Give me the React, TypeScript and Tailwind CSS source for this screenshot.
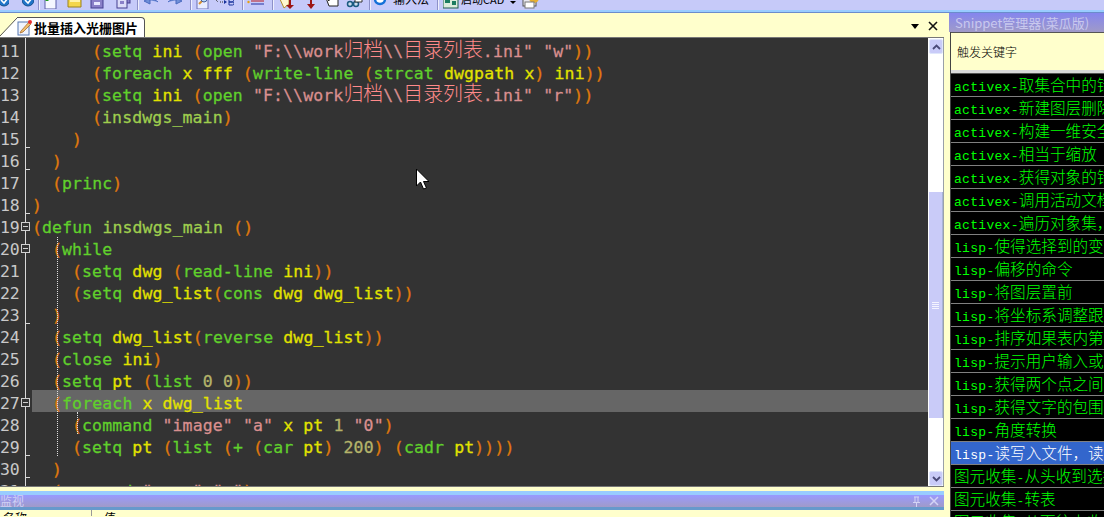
import React from "react";

const P = "text-[#e07a0c]";
const F = "text-[#60d02c]";
const V = "text-[#e2e200]";
const S = "text-[#d98f8f]";
const N = "text-[#b5b36a]";
const O = "text-[#9fce4e]";

type Tok = [string, string];
type Line = { n: number; ind: string; toks: Tok[]; fold?: boolean; tick?: boolean; hl?: boolean };

function Str({ text }: { text: string }) {
  const parts = text.split(/([\u4e00-\u9fff]+)/);
  return (
    <span className={S}>
      {parts.map((p, i) =>
        /[\u4e00-\u9fff]/.test(p) ? (
          <span key={i} className="text-[#ff8a8a] text-[19.900px] font-light tracking-normal leading-[0px] [-webkit-text-stroke:0px] font-['Noto_Sans_CJK_SC',sans-serif]">{p}</span>
        ) : (
          <span key={i}>{p}</span>
        )
      )}
    </span>
  );
}

const I0 = "pl-[0px]";
const I2 = "pl-[20px]";
const I4 = "pl-[40px]";
const I6 = "pl-[60px]";

const lines: Line[] = [
  { n: 11, ind: I6, toks: [[P, "("], [F, "setq"], [V, " ini "], [P, "("], [F, "open"], [S, ' "F:\\\\work归档\\\\目录列表.ini" "w"'], [P, "))"]] },
  { n: 12, ind: I6, toks: [[P, "("], [F, "foreach"], [V, " x fff "], [P, "("], [F, "write-line"], [V, " "], [P, "("], [F, "strcat"], [V, " dwgpath x"], [P, ")"], [V, " ini"], [P, "))"]] },
  { n: 13, ind: I6, toks: [[P, "("], [F, "setq"], [V, " ini "], [P, "("], [F, "open"], [S, ' "F:\\\\work归档\\\\目录列表.ini" "r"'], [P, "))"]] },
  { n: 14, ind: I6, toks: [[P, "("], [O, "insdwgs_main"], [P, ")"]] },
  { n: 15, ind: I4, toks: [[P, ")"]], tick: true },
  { n: 16, ind: I2, toks: [[P, ")"]], tick: true },
  { n: 17, ind: I2, toks: [[P, "("], [F, "princ"], [P, ")"]] },
  { n: 18, ind: I0, toks: [[P, ")"]], tick: true },
  { n: 19, ind: I0, fold: true, toks: [[P, "("], [F, "defun"], [O, " insdwgs_main "], [P, "()"]] },
  { n: 20, ind: I2, fold: true, toks: [[P, "("], [F, "while"]] },
  { n: 21, ind: I4, toks: [[P, "("], [F, "setq"], [V, " dwg "], [P, "("], [F, "read-line"], [V, " ini"], [P, "))"]] },
  { n: 22, ind: I4, toks: [[P, "("], [F, "setq"], [V, " dwg_list"], [P, "("], [F, "cons"], [V, " dwg dwg_list"], [P, "))"]] },
  { n: 23, ind: I2, toks: [[P, ")"]], tick: true },
  { n: 24, ind: I2, toks: [[P, "("], [F, "setq"], [V, " dwg_list"], [P, "("], [F, "reverse"], [V, " dwg_list"], [P, "))"]] },
  { n: 25, ind: I2, toks: [[P, "("], [F, "close"], [V, " ini"], [P, ")"]] },
  { n: 26, ind: I2, toks: [[P, "("], [F, "setq"], [V, " pt "], [P, "("], [F, "list"], [N, " 0 0"], [P, "))"]] },
  { n: 27, ind: I2, fold: true, hl: true, toks: [[P, "("], [F, "foreach"], [V, " x dwg_list"]] },
  { n: 28, ind: I4, toks: [[P, "("], [F, "command"], [S, ' "image" "a"'], [V, " x pt "], [N, "1"], [S, ' "0"'], [P, ")"]] },
  { n: 29, ind: I4, tick: true, toks: [[P, "("], [F, "setq"], [V, " pt "], [P, "("], [F, "list"], [V, " "], [P, "("], [F, "+"], [V, " "], [P, "("], [F, "car"], [V, " pt"], [P, ")"], [N, " 200"], [P, ")"], [V, " "], [P, "("], [F, "cadr"], [V, " pt"], [P, "))))"]] },
  { n: 30, ind: I2, tick: true, toks: [[P, ")"]] },
  { n: 31, ind: I2, toks: [[P, "("], [F, "command"], [S, ' "zoom" "e"'], [P, ")"]] },
];

function CodeRow({ l }: { l: Line }) {
  return (
    <div className="flex h-[22px] leading-[28px] whitespace-pre">
      <div className="w-[19px] shrink-0 text-right text-[#c9c9c9] -tracking-[0.3px] [-webkit-text-stroke:0px]">{l.n}</div>
      <div className="w-[6px] shrink-0" />
      <div className="relative w-[7px] shrink-0 border-l border-[#d8d8d8]">
        {l.fold && (
          <div className="absolute left-[-5px] top-[8px] w-[9px] h-[9px] border border-[#d0d0d0] bg-[#333333] flex items-center justify-center">
            <div className="w-[5px] h-px bg-[#d0d0d0]" />
          </div>
        )}
        {l.tick && <div className="absolute left-0 bottom-0 w-[4px] h-px bg-[#d8d8d8]" />}
      </div>
      <div className={`flex-1 tracking-[0.12px] ${l.ind} ${l.hl ? "bg-[#666666]" : ""}`}>
        {l.toks.map((t, i) => (t[0] === S ? <Str key={i} text={t[1]} /> : <span key={i} className={t[0]}>{t[1]}</span>))}
      </div>
    </div>
  );
}

const rows: string[] = [
  "activex-取集合中的错误",
  "activex-新建图层删除图层",
  "activex-构建一维安全数组",
  "activex-相当于缩放",
  "activex-获得对象的错误",
  "activex-调用活动文档对象",
  "activex-遍历对象集，获得",
  "lisp-使得选择到的变量",
  "lisp-偏移的命令",
  "lisp-将图层置前",
  "lisp-将坐标系调整跟对象",
  "lisp-排序如果表内第一",
  "lisp-提示用户输入或选",
  "lisp-获得两个点之间的",
  "lisp-获得文字的包围框",
  "lisp-角度转换",
  "lisp-读写入文件，读取",
  "图元收集-从头收到选择",
  "图元收集-转表",
  "图元收集-从下往上收集",
];

function Mixed({ text }: { text: string }) {
  const parts = text.split(/([a-z-]+)/);
  return (
    <>
      {parts.map((p, i) =>
        /[a-z-]/.test(p) ? (
          <span key={i} className="text-[13px] font-['Liberation_Mono',monospace] tracking-[0.3px]">{p}</span>
        ) : (
          <span key={i} className="text-[15.600px] font-light font-['Noto_Sans_CJK_SC',sans-serif]">{p}</span>
        )
      )}
    </>
  );
}

function Ico({ w, children }: { w: number; children: React.ReactNode }) {
  return (
    <svg width={w} height={16} viewBox={`0 0 ${w} 16`} className="shrink-0 -mt-[7px]">
      {children}
    </svg>
  );
}

function Sep() {
  return <div className="w-[2px] h-[10px] shrink-0 border-l border-[#8d91c8] bg-white/70" />;
}

function Toolbar() {
  return (
    <div className="h-[13px] shrink-0 overflow-hidden bg-[#c6caf9] flex flex-col">
      <div className="h-[10px] shrink-0 flex items-start overflow-hidden">
        <div className="ml-[-1px] mr-[13px]">
          <Ico w={10}><circle cx="5" cy="7" r="6" fill="#1f74c8" stroke="#16508c" /><path d="M2 7l3 3 4-5" stroke="#fff" strokeWidth="1.6" fill="none" /></Ico>
        </div>
        <div className="mr-[7px]">
          <Ico w={12}><circle cx="6" cy="7" r="6" fill="#1f74c8" stroke="#16508c" /><path d="M3 7l3 3 4-5" stroke="#fff" strokeWidth="1.6" fill="none" /></Ico>
        </div>
        <div className="ml-[-3px] mr-[2px]"><Sep /></div>
        <div className="mr-[8px]">
          <Ico w={17}><rect x="3" y="1" width="11" height="15" fill="#f4f6ff" stroke="#5a5fa8" /><path d="M1 4h8M5 0v8" stroke="#1e9c1e" strokeWidth="3" /></Ico>
        </div>
        <div className="mr-[7px]">
          <Ico w={16}><path d="M1 3h13v11H1z" fill="#f4d64c" stroke="#9a8220" /><path d="M3 8h10" stroke="#fff3a8" strokeWidth="2" /></Ico>
        </div>
        <div className="mr-[12px]">
          <Ico w={14}><rect x="1" y="1" width="12" height="14" fill="#8a80c8" stroke="#453e90" /><rect x="4" y="9" width="6" height="3" fill="#e8e8ff" /></Ico>
        </div>
        <div className="mr-[6px]">
          <Ico w={15}><rect x="4" y="0" width="10" height="10" fill="#8a80c8" stroke="#453e90" /><rect x="1" y="3" width="10" height="12" fill="#dcdcf8" stroke="#453e90" /><rect x="4" y="8" width="4" height="3" fill="#8a80c8" /></Ico>
        </div>
        <Sep />
        <div className="ml-[3px] mr-[8px]">
          <Ico w={17}><path d="M8 5L2 8l6 3zM7 7c4-1 7 0 9 2" fill="#6f8fd8" stroke="#4a6ac0" /></Ico>
        </div>
        <div className="mr-[6px]">
          <Ico w={17}><path d="M9 5l6 3-6 3zM10 7C6 6 3 7 1 9" fill="#6f8fd8" stroke="#4a6ac0" /></Ico>
        </div>
        <Sep />
        <div className="ml-[3px] mr-[6px]">
          <Ico w={15}><rect x="2" y="1" width="11" height="15" fill="#e8ecff" stroke="#6a70b8" /><path d="M4 11l3-3" stroke="#d89030" strokeWidth="2" /><circle cx="9" cy="6" r="3" fill="#b8d8f8" stroke="#46609c" /></Ico>
        </div>
        <div className="mr-[8px]">
          <Ico w={18}><path d="M0 7l2 2M4 9h5" stroke="#333" strokeDasharray="1 1" fill="none" /><path d="M8 7l3 2-3 2z" fill="#16309a" /><path d="M13 6h3a1.5 1.5 0 010 3h-3zm0 3h3.500a1.500 1.500 0 010 3H13z" fill="none" stroke="#16309a" /></Ico>
        </div>
        <Sep />
        <div className="ml-[3px] mr-[7px]">
          <Ico w={18}><path d="M4 8h13" stroke="#bb1a1a" /><path d="M4 11h13" stroke="#2230a0" /><circle cx="1.500" cy="9" r="1.200" fill="#e8a010" /></Ico>
        </div>
        <Sep />
        <div className="ml-[4px] mr-[10px]">
          <Ico w={17}><path d="M1 4h10v7l-5 4z" fill="#fff8d0" stroke="#b09030" /><path d="M12 1v12" stroke="#9c1414" strokeWidth="2" /><path d="M8 12h8l-4 4z" fill="#9c1414" /></Ico>
        </div>
        <div className="mr-[6px]">
          <Ico w={12}><path d="M6 1v12" stroke="#9c1414" strokeWidth="2" /><path d="M2 11h8l-4 5z" fill="#9c1414" /></Ico>
        </div>
        <div className="mr-[6px]">
          <Ico w={17}><path d="M3 5l3 3V3h6l1 2 2 1v7H6z" fill="#fff" stroke="#222" /></Ico>
        </div>
        <div className="mr-[6px]">
          <Ico w={17}><circle cx="4" cy="11" r="2.500" fill="#cde" stroke="#1b5a80" strokeWidth="1.500" /><circle cx="10" cy="11" r="2.500" fill="#cde" stroke="#1b5a80" strokeWidth="1.500" /><path d="M9 3h7v6H9z" fill="#fff" stroke="#333" /></Ico>
        </div>
        <Sep />
        <div className="ml-[3px] mr-[7px]">
          <Ico w={12}><circle cx="6" cy="6" r="5" fill="#fff" stroke="#1470d8" strokeWidth="2.500" /></Ico>
        </div>
        <div className="mr-[10px] w-[34px] -mt-[9px] text-[12px] leading-[16px] text-black font-['Noto_Sans_CJK_SC',sans-serif] whitespace-nowrap">输入法</div>
        <Sep />
        <div className="ml-[4px] mr-[2px]">
          <Ico w={16}><rect x="0" y="1" width="15" height="14" fill="#dcecdc" stroke="#1c5c50" /><path d="M2 5h5v5H2zM9 8h4v4H9z" fill="#1c7c60" /></Ico>
        </div>
        <div className="mr-[8px] w-[41px] -mt-[9px] text-[11px] leading-[16px] text-black font-['Noto_Sans_CJK_SC',sans-serif] whitespace-nowrap">启动CAD</div>
        <div className="mr-[6px] mt-[1px] w-0 h-0 border-x-[3px] border-x-transparent border-t-[3px] border-t-black" />
        <Ico w={18}><rect x="1" y="6" width="13" height="7" fill="#e8e8f0" stroke="#555" /><circle cx="12" cy="5" r="5" fill="#e8b030" /><rect x="3" y="9" width="9" height="6" fill="#fff" stroke="#777" /></Ico>
      </div>
      <div className="h-[2px] shrink-0 bg-[#99ccff]" />
      <div className="h-px shrink-0 bg-[#6b8ccb]" />
    </div>
  );
}

function TabStrip() {
  return (
    <div className="h-[25px] shrink-0 bg-[#ffffcc] flex flex-col">
      <div className="h-[24px] flex items-end">
        <svg width="17" height="20" viewBox="0 0 17 20" className="shrink-0">
          <path d="M0 20L17 1V20Z" fill="#fff" />
          <path d="M0 19L17 1" stroke="#555" fill="none" />
        </svg>
        <div className="w-[128px] h-[20px] bg-white border-t border-r border-[#555] rounded-tr-[4px] flex items-center">
          <svg width="16" height="17" viewBox="0 0 16 17" className="shrink-0">
            <rect x="1" y="3" width="11" height="13" fill="#f0f4ff" stroke="#5577b0" />
            <path d="M4 12L12 3l2 2-8 8-3 1z" fill="#f0c070" stroke="#a06020" strokeWidth=".7" />
            <circle cx="13" cy="3" r="2" fill="#e83030" />
          </svg>
          <span className="ml-[1px] text-[13px] font-bold text-black font-['Noto_Sans_CJK_SC',sans-serif] whitespace-nowrap">批量插入光栅图片</span>
        </div>
        <div className="flex-1 h-full flex items-center justify-end pr-[6px] pt-[2px]">
          <div className="w-0 h-0 border-x-[4px] border-x-transparent border-t-[5px] border-t-black mr-[9px]" />
          <svg width="10" height="10" viewBox="0 0 10 10"><path d="M1 1l8 8M9 1l-8 8" stroke="#111" strokeWidth="1.600" /></svg>
        </div>
      </div>
      <div className="h-px bg-[#777777]" />
    </div>
  );
}

function ScrollBtn({ up }: { up?: boolean }) {
  return (
    <div className="h-[15px] w-[14px] bg-[#c9cbf8] border border-[#dfe6fb] rounded-[2px] flex items-center justify-center shrink-0">
      <svg width="9" height="6" viewBox="0 0 9 6">
        <path d={up ? "M1 5l3.500-3.500L8 5" : "M1 1l3.500 3.500L8 1"} stroke="#4a4a78" strokeWidth="1.800" fill="none" />
      </svg>
    </div>
  );
}

function Scrollbar() {
  return (
    <div className="w-[16px] shrink-0 bg-white flex flex-col pl-px pt-px border-r border-[#9aa0a8]">
      <ScrollBtn up />
      <div className="h-[138px] shrink-0" />
      <div className="h-[226px] w-[14px] shrink-0 bg-[#c9cbf8] border-r border-[#a8b4d8] flex flex-col items-center justify-center gap-px">
        <div className="w-[7px] h-px bg-[#f4f4ff]" />
        <div className="w-[7px] h-px bg-[#f4f4ff]" />
        <div className="w-[7px] h-px bg-[#f4f4ff]" />
        <div className="w-[7px] h-px bg-[#f4f4ff]" />
      </div>
      <div className="h-[53px] shrink-0" />
      <ScrollBtn />
    </div>
  );
}

function Editor() {
  return (
    <div className="h-[449px] shrink-0 flex overflow-hidden border-b border-[#777777]">
      <div className="relative flex-1 bg-[#333333] overflow-hidden text-[16.500px] [-webkit-text-stroke:0.3px] font-['DejaVu_Sans_Mono',monospace]">
        {lines.map((l) => (
          <CodeRow key={l.n} l={l} />
        ))}
        <div className="absolute left-[57px] top-[199px] h-[219px] border-l border-dotted border-[#e0e0e0]" />
        <div className="absolute left-[77px] top-[374px] h-[22px] border-l border-dotted border-[#e0e0e0]" />
        <svg width="14" height="22" viewBox="0 0 14 22" className="absolute left-[415px] top-[130px]">
          <path d="M1.500 1v17l4-4 3 7 3-1-3-6.500h5.500z" fill="#fff" stroke="#000" />
        </svg>
      </div>
      <Scrollbar />
    </div>
  );
}

function BottomPanel() {
  return (
    <div className="h-[29px] shrink-0 flex flex-col overflow-hidden">
      <div className="h-[4px] shrink-0 bg-[#ffffcc]" />
      <div className="h-[4px] shrink-0 bg-[#99ccff]" />
      <div className="h-[12px] shrink-0 bg-gradient-to-b from-[#9999ff] to-[#a09ac8] flex items-center justify-between pr-[5px]">
        <span className="text-[12px] leading-[12px] text-[#d0d0f4] font-['Noto_Sans_CJK_SC',sans-serif]">监视</span>
        <div className="flex items-center gap-[8px]">
          <svg width="9" height="11" viewBox="0 0 9 11">
            <path d="M2 1h5M3 1v5M6 1v5M1 6.500h7M4.500 7v4" stroke="#d4d4f4" fill="none" />
          </svg>
          <svg width="10" height="10" viewBox="0 0 10 10">
            <path d="M1 1l8 8M9 1l-8 8" stroke="#d4d4f4" strokeWidth="1.500" />
          </svg>
        </div>
      </div>
      <div className="h-[3px] shrink-0 bg-[#6699cc]" />
      <div className="flex-1 bg-[#ffffcc] flex overflow-hidden">
        <div className="w-[92px] shrink-0 border-r border-[#999999] pl-[3px]">
          <span className="block text-[12px] leading-[16px] text-black font-['Noto_Sans_CJK_SC',sans-serif]">名称</span>
        </div>
        <span className="ml-[12px] text-[12px] leading-[16px] text-black font-['Noto_Sans_CJK_SC',sans-serif]">值</span>
      </div>
    </div>
  );
}

function SnippetPanel() {
  return (
    <div className="flex-1 min-w-0 flex flex-col overflow-hidden">
      <div className="h-[19px] shrink-0 bg-gradient-to-b from-[#8585ee] to-[#a09ac8] pl-[6px] text-[13px] leading-[19px] text-[#c8c8ee] font-['Noto_Sans_CJK_SC',sans-serif] whitespace-nowrap">
        Snippet管理器(菜瓜版)
      </div>
      <div className="flex-1 min-h-0 ml-px border-l border-[#444444] flex flex-col">
        <div className="h-[38px] shrink-0 bg-[#ffffcc] border-t border-[#555555] flex items-center pl-[6px] text-[12px] font-light text-black font-['Noto_Sans_CJK_SC',sans-serif]">
          触发关键字
        </div>
        <div className="h-[4px] shrink-0 bg-[#d9d9d9] border-b border-[#555555]" />
        <div className="flex-1 bg-black overflow-hidden">
          {rows.map((r, i) => (
            <div
              key={i}
              className={`h-[23px] leading-[20px] border-b border-[#808080] pl-[3px] whitespace-nowrap ${
                r.startsWith("lisp-读") ? "bg-[#3366cc] text-white" : "text-[#00ff00]"
              }`}
            >
              <Mixed text={r} />
            </div>
          ))}
        </div>
      </div>
    </div>
  );
}

export default function App() {
  return (
    <div className="w-[1104px] h-[517px] overflow-hidden flex flex-col bg-[#ffffcc]">
      <Toolbar />
      <div className="flex-1 min-h-0 flex">
        <div className="w-[944px] shrink-0 flex flex-col">
          <TabStrip />
          <Editor />
          <BottomPanel />
        </div>
        <div className="w-[5px] shrink-0 bg-[#ffffcc]" />
        <SnippetPanel />
      </div>
    </div>
  );
}
